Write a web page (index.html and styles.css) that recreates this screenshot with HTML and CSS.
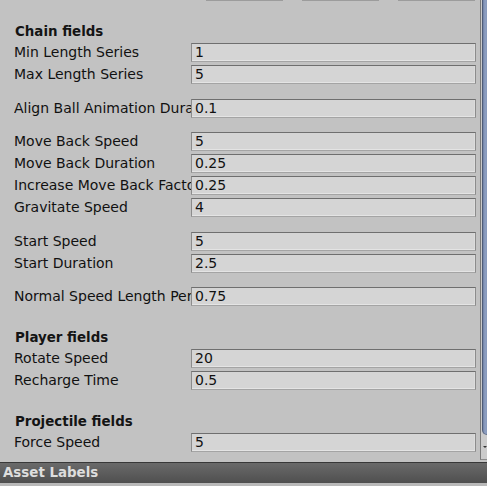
FILE: index.html
```html
<!DOCTYPE html>
<html>
<head>
<meta charset="utf-8">
<link rel="stylesheet" href="styles.css">
</head>
<body>
<div class="main">
  <div class="content">
    <div class="toolbar">
      <div class="tbtn"></div>
      <div class="tbtn"></div>
      <div class="tbtn"></div>
    </div>

    <div class="header first">Chain fields</div>
    <div class="row"><div class="label">Min Length Series</div><div class="field">1</div></div>
    <div class="row"><div class="label">Max Length Series</div><div class="field">5</div></div>
    <div class="space"></div>
    <div class="row"><div class="label">Align Ball Animation Duration</div><div class="field">0.1</div></div>
    <div class="space"></div>
    <div class="row"><div class="label">Move Back Speed</div><div class="field">5</div></div>
    <div class="row"><div class="label">Move Back Duration</div><div class="field">0.25</div></div>
    <div class="row"><div class="label">Increase Move Back Factor</div><div class="field">0.25</div></div>
    <div class="row"><div class="label">Gravitate Speed</div><div class="field">4</div></div>
    <div class="space"></div>
    <div class="row"><div class="label">Start Speed</div><div class="field">5</div></div>
    <div class="row"><div class="label">Start Duration</div><div class="field">2.5</div></div>
    <div class="space"></div>
    <div class="row"><div class="label">Normal Speed Length Percent</div><div class="field">0.75</div></div>

    <div class="header">Player fields</div>
    <div class="row"><div class="label">Rotate Speed</div><div class="field">20</div></div>
    <div class="row"><div class="label">Recharge Time</div><div class="field">0.5</div></div>

    <div class="header">Projectile fields</div>
    <div class="row"><div class="label">Force Speed</div><div class="field">5</div></div>
  </div>
  <div class="scrollbar">
    <div class="thumb"></div>
    <div class="track"><span class="arrow"></span></div>
  </div>
</div>
<div class="assetbar">Asset Labels</div>
</body>
</html>
```

FILE: styles.css
```css
html, body {
  margin: 0;
  padding: 0;
}
body {
  width: 487px;
  height: 486px;
  background: #b9b9b9;
  font-family: "DejaVu Sans", sans-serif;
  font-size: 14px;
  color: #111;
  overflow: hidden;
}
.main {
  display: flex;
  height: 462px;
  background: #c2c2c2;
  overflow: hidden;
}
.content {
  width: 480px;
  padding-right: 4px;
  box-sizing: border-box;
  display: flex;
  flex-direction: column;
}
.toolbar {
  display: flex;
  gap: 19px;
  padding-left: 206px;
  height: 1px;
  align-items: flex-end;
}
.tbtn {
  width: 77px;
  height: 1px;
  background: #9c9c9c;
}
.header {
  height: 22px;
  line-height: 22px;
  margin-top: 21px;
  padding-left: 15px;
  font-weight: bold;
  font-size: 13.4px;
  color: #141414;
}
.header.first {
  margin-top: 20px;
}
.row {
  display: flex;
  height: 19px;
  align-items: center;
}
.row + .row {
  margin-top: 3px;
}
.space {
  height: 14.5px;
  flex: none;
}
.label {
  width: 177px;
  margin-left: 14px;
  white-space: nowrap;
  overflow: hidden;
  line-height: 19px;
  flex: none;
}
.field {
  flex: 1;
  height: 19px;
  box-sizing: border-box;
  background: #d5d5d5;
  border: 1px solid #8c8c8c;
  border-top-color: #6f6f6f;
  border-bottom-color: #a4a4a4;
  box-shadow: inset 0 -1px 0 #e4e4e4, inset -1px 0 0 #dcdcdc;
  padding-left: 3px;
  line-height: 17px;
  color: #111;
  white-space: nowrap;
}
.scrollbar {
  width: 7px;
  height: 460px;
  display: flex;
  flex-direction: column;
  border-left: 1px solid #7a7a7a;
  box-sizing: border-box;
  background: #cbcbcb;
  border-bottom: 1px solid #8a8a8a;
}
.thumb {
  height: 435px;
  margin-left: 1px;
  background: linear-gradient(to right, #6f80a4, #8fa0c2 50%, #8798ba);
  border-left: 1px solid #4f5c78;
  border-bottom-left-radius: 5px;
  border-bottom: 1px solid #5d6b88;
  box-sizing: border-box;
}
.track {
  flex: 1;
  position: relative;
}
.arrow {
  position: absolute;
  left: 2px;
  top: 11px;
  width: 0;
  height: 0;
  border-left: 2px solid transparent;
  border-right: 2px solid transparent;
  border-top: 2px solid #333;
}
.assetbar {
  height: 21px;
  box-sizing: border-box;
  border-top: 1px solid #383838;
  background: linear-gradient(#6a6a6a, #4f4f4f);
  color: #dedede;
  font-weight: bold;
  font-size: 13.4px;
  line-height: 20px;
  padding-left: 3px;
}
```
